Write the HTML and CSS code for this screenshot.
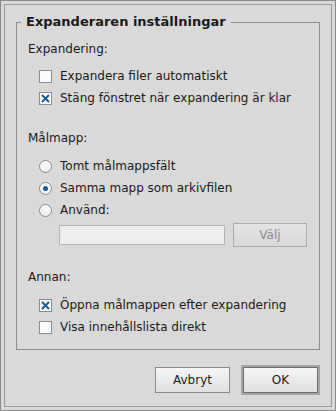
FILE: index.html
```html
<!DOCTYPE html>
<html lang="sv">
  <head>
    <meta charset="UTF-8" />
    <title>Expanderaren inställningar</title>
    <link rel="stylesheet" href="styles.css">
  </head>
  <body>
    <div class="window">
      <div class="frame">
        <fieldset class="group">
          <legend>Expanderaren inställningar</legend>

          <div class="section-title">Expandering:</div>
          <label class="option">
            <span class="check"></span>
            Expandera filer automatiskt
          </label>
          <label class="option">
            <span class="check">
              <svg width="9" height="9" viewBox="0 0 9 9"><path d="M1 1L8 8M8 1L1 8" /></svg>
            </span>
            Stäng fönstret när expandering är klar
          </label>

          <div class="section-title spaced">Målmapp:</div>
          <label class="option">
            <span class="radio"></span>
            Tomt målmappsfält
          </label>
          <label class="option">
            <span class="radio selected"></span>
            Samma mapp som arkivfilen
          </label>
          <label class="option">
            <span class="radio"></span>
            Använd:
          </label>
          <div class="path-row">
            <input class="path" type="text" disabled />
            <button class="btn small" disabled>Välj</button>
          </div>

          <div class="section-title spaced wide">Annan:</div>
          <label class="option">
            <span class="check">
              <svg width="9" height="9" viewBox="0 0 9 9"><path d="M1 1L8 8M8 1L1 8" /></svg>
            </span>
            Öppna målmappen efter expandering
          </label>
          <label class="option">
            <span class="check"></span>
            Visa innehållslista direkt
          </label>
        </fieldset>

        <div class="actions">
          <button class="btn">Avbryt</button>
          <button class="btn default">OK</button>
        </div>
      </div>
    </div>
  </body>
</html>
```

FILE: styles.css
```css
* {
  box-sizing: border-box;
}
html,
body {
  margin: 0;
}
body {
  background: #d9d9d9;
  font-family: "DejaVu Sans", sans-serif;
  font-size: 12px;
  color: #1a1a1a;
}
.window {
  height: 411px;
  border: 1px solid #8a8a8a;
  padding: 3px;
  display: flex;
  flex-direction: column;
}
.frame {
  flex: 1;
  border: 1px solid #9c9c9c;
  display: flex;
  flex-direction: column;
}
.group {
  margin: 9px 11px 0;
  padding: 12px 11px 11px;
  border: 1px solid #8e8e8e;
  min-width: 0;
}
.group legend {
  font-size: 13px;
  font-weight: bold;
  line-height: 16px;
  padding: 0 5px;
  margin-left: -7px;
}
.section-title {
  line-height: 14px;
}
.section-title.spaced {
  margin-top: 22px;
  margin-bottom: 10px;
}
.section-title.wide {
  margin-top: 23px;
}
.section-title:first-of-type {
  margin-bottom: 9px;
}
.option {
  display: flex;
  align-items: center;
  gap: 8px;
  height: 22px;
  margin-left: 11px;
}
.check {
  width: 13px;
  height: 13px;
  border: 1px solid #8c8c8c;
  background: #fbfbfb;
  display: flex;
  align-items: center;
  justify-content: center;
}
.check svg path {
  stroke: #1d5b9b;
  stroke-width: 2;
  fill: none;
}
.radio {
  width: 13px;
  height: 13px;
  border: 1px solid #8c8c8c;
  border-radius: 50%;
  background: linear-gradient(#ffffff, #ececec);
  display: flex;
  align-items: center;
  justify-content: center;
}
.radio.selected::after {
  content: "";
  width: 5px;
  height: 5px;
  border-radius: 50%;
  background: #135b9b;
}
.path-row {
  display: flex;
  align-items: center;
  gap: 8px;
  height: 24px;
  margin: 2px 0 0 31px;
}
.path {
  width: 166px;
  height: 20px;
  border: 1px solid #b4b4b4;
  background: #eeeeee;
  margin: 0;
}
.btn {
  width: 75px;
  height: 26px;
  border: 1px solid #8a8a8a;
  border-radius: 0;
  background: linear-gradient(#f5f5f5, #e0e0e0);
  font: inherit;
  color: #1a1a1a;
  padding: 0;
}
.btn.small {
  width: 74px;
  height: 24px;
}
.btn:disabled {
  border-color: #ababab;
  background: linear-gradient(#e4e4e4, #d8d8d8);
  color: #8c8c8c;
}
.btn.default {
  border-color: #6e6e6e;
  box-shadow: 0 0 0 2px #a6a6a6;
}
.actions {
  display: flex;
  justify-content: flex-end;
  gap: 13px;
  margin-top: 17px;
  padding-right: 13px;
}
```
